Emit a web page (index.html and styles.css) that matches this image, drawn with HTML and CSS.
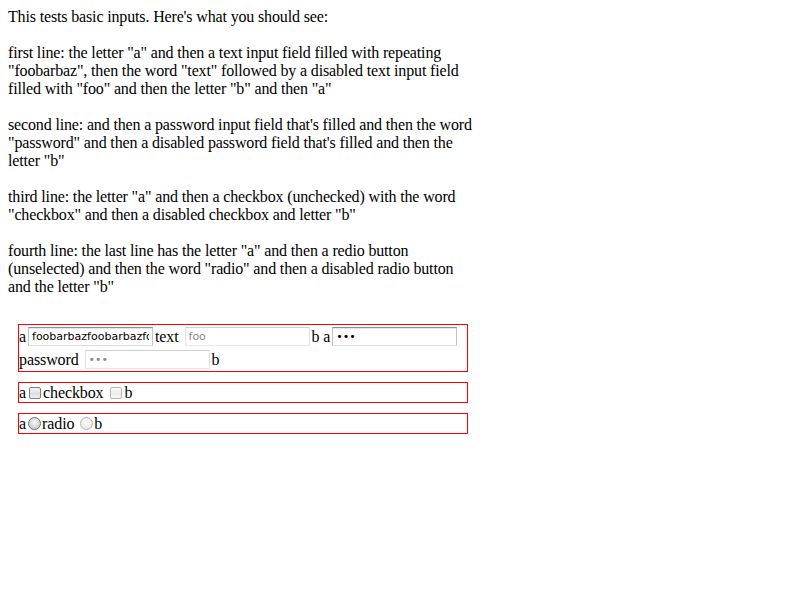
FILE: index.html
```html
<!DOCTYPE html>
<html>
<head>
<meta charset="utf-8">
<link rel="stylesheet" href="styles.css">
</head>
<body>
<div class="intro">This tests basic inputs. Here's what you should see:<br><br>first line: the letter "a" and then a text input field filled with repeating "foobarbaz", then the word "text" followed by a disabled text input field filled with "foo" and then the letter "b" and then "a"<br><br>second line: and then a password input field that's filled and then the word "password" and then a disabled password field that's filled and then the letter "b"<br><br>third line: the letter "a" and then a checkbox (unchecked) with the word "checkbox" and then a disabled checkbox and letter "b"<br><br>fourth line: the last line has the letter "a" and then a redio button (unselected) and then the word "radio" and then a disabled radio button and the letter "b"<br><br></div>
<div class="box box-text">a<input class="field" type="text" value="foobarbazfoobarbazfoobarbaz">text <input class="field" type="text" value="foo" disabled>b a<input class="field" type="password" value="foo"> password <input class="field" type="password" value="foo" disabled>b</div>
<div class="box box-check">a<input class="check" type="checkbox">checkbox <input class="check" type="checkbox" disabled>b</div>
<div class="box box-radio">a<input class="radio" type="radio">radio <input class="radio" type="radio" disabled>b</div>
</body>
</html>
```
FILE: styles.css
```css
body {
  margin: 8px;
  font-family: "Liberation Serif", "Times New Roman", serif;
  font-size: 16px;
  line-height: 18px;
  color: #000;
  background: #fff;
}

.intro {
  width: 470px;
  letter-spacing: -0.15px;
}

.box {
  border: 1px solid #ff0000;
  width: 448px;
  margin: 10px;
  letter-spacing: -0.1px;
}

.box-text {
  line-height: 23px;
}

.box-check,
.box-radio {
  line-height: 19px;
}

.field {
  box-sizing: border-box;
  width: 125px;
  height: 19px;
  margin: 2px;
  padding: 0 3px;
  vertical-align: top;
  font-family: "DejaVu Sans", Verdana, sans-serif;
  font-size: 11px;
  line-height: 17px;
  letter-spacing: 0;
  color: #000;
  background: #fff;
  border: 1px solid;
  border-color: #8f8f8f #c4c4c4 #dcdcdc #c4c4c4;
  box-shadow: inset 0 1px 0 #e6e6e6;
  border-radius: 0;
  outline: none;
}

.field:disabled {
  color: #8a8a8a;
  border-color: #d0d0d0 #e2e2e2 #e8e8e8 #e2e2e2;
  box-shadow: none;
  background: #fff;
}

.check {
  appearance: none;
  -webkit-appearance: none;
  box-sizing: border-box;
  width: 12px;
  height: 12px;
  margin: 4px 2px 3px 3px;
  vertical-align: top;
  border: 1px solid #7d7d7d;
  border-radius: 2px;
  background: linear-gradient(#f4f4f4 0, #e4e4e4 45%, #c9c9c9 50%, #dcdcdc 55%, #f0f0f0 100%);
}

.check:disabled {
  border-color: #b8b8b8;
  background: linear-gradient(#fafafa 0, #f0f0f0 45%, #e0e0e0 50%, #ececec 55%, #f8f8f8 100%);
}

.radio {
  appearance: none;
  -webkit-appearance: none;
  box-sizing: border-box;
  width: 13px;
  height: 13px;
  margin: 3px 1px 3px 2px;
  vertical-align: top;
  border: 1px solid #6f6f6f;
  border-radius: 50%;
  background: radial-gradient(circle at 50% 40%, #f6f6f6 0%, #d6d6d6 60%, #bcbcbc 100%);
}

.radio:disabled {
  border-color: #b4b4b4;
  background: radial-gradient(circle at 50% 40%, #ffffff 0%, #ececec 60%, #dcdcdc 100%);
}
```
